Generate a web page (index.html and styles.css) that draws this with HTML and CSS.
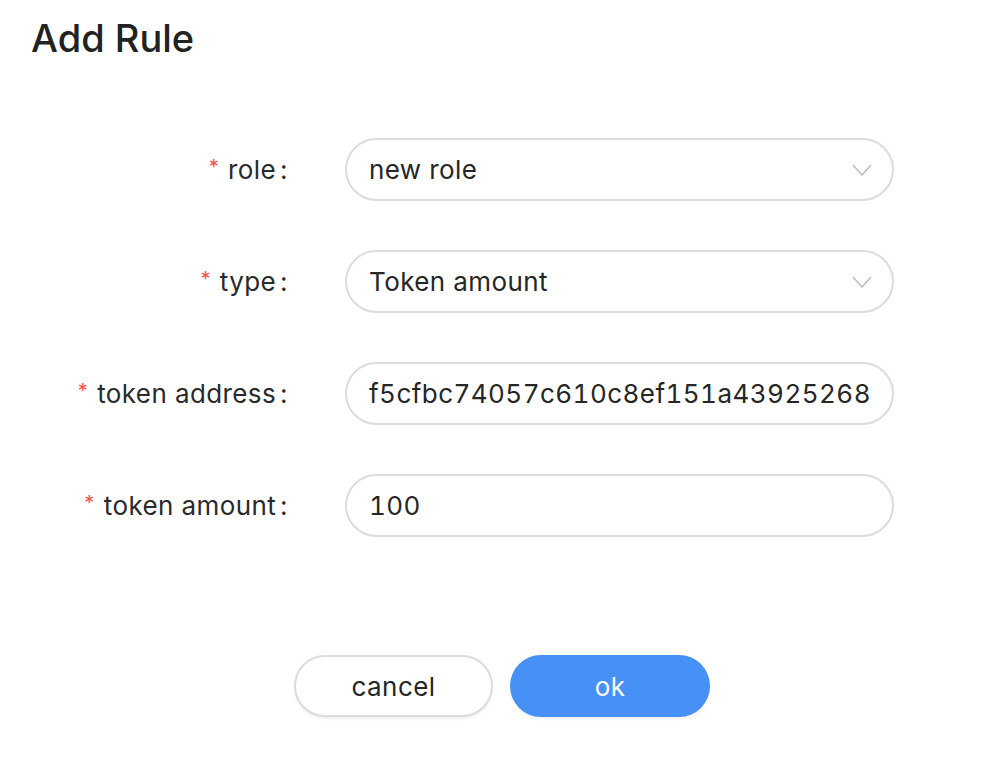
FILE: index.html
```html
<!DOCTYPE html>
<html>
<head>
<meta charset="utf-8">
<link rel="stylesheet" href="styles.css">
</head>
<body>
<div class="dialog">
  <h1 class="title">Add Rule</h1>
  <form class="form">
    <div class="row">
      <label class="label"><span class="req">*</span>role<span class="colon">:</span></label>
      <div class="field select"><span class="value">new role</span>
        <svg class="chev" width="20" height="12" viewBox="0 0 20 12"><path d="M1 1 L10 11 L19 1" fill="none" stroke="#bdbdbd" stroke-width="1.5"/></svg>
      </div>
    </div>
    <div class="row">
      <label class="label"><span class="req">*</span>type<span class="colon">:</span></label>
      <div class="field select"><span class="value">Token amount</span>
        <svg class="chev" width="20" height="12" viewBox="0 0 20 12"><path d="M1 1 L10 11 L19 1" fill="none" stroke="#bdbdbd" stroke-width="1.5"/></svg>
      </div>
    </div>
    <div class="row">
      <label class="label"><span class="req">*</span>token address<span class="colon">:</span></label>
      <div class="field"><span class="value num">f5cfbc74057c610c8ef151a43925268</span></div>
    </div>
    <div class="row">
      <label class="label"><span class="req">*</span>token amount<span class="colon">:</span></label>
      <div class="field"><span class="value num">100</span></div>
    </div>
  </form>
  <div class="actions">
    <button class="btn cancel" type="button">cancel</button>
    <button class="btn ok" type="button">ok</button>
  </div>
</div>
</body>
</html>
```
FILE: styles.css
```css
html, body {
  margin: 0;
  padding: 0;
  background: #fff;
}
body {
  font-family: Inter, "Noto Sans", sans-serif;
  color: #262626;
}
.dialog {
  width: 984px;
  height: 768px;
}
.title {
  margin: 0;
  padding: 14px 0 0 31px;
  font-size: 38px;
  font-weight: 500;
  line-height: 48px;
  color: #222;
}
.form {
  margin-top: 76px;
  display: flex;
  flex-direction: column;
  gap: 49px;
}
.row {
  display: flex;
  align-items: center;
}
.label {
  width: 288px;
  flex: none;
  text-align: right;
  font-size: 26px;
  letter-spacing: 0.4px;
  color: #2a2a2a;
  display: flex;
  justify-content: flex-end;
  align-items: center;
}
.req {
  color: #f5504e;
  font-size: 20px;
  margin-right: 9px;
  position: relative;
  top: -3px;
}
.colon {
  margin-left: 4px;
}
.field {
  margin-left: 57px;
  width: 549px;
  height: 63px;
  box-sizing: border-box;
  border: 2px solid #dcdcdc;
  border-radius: 32px;
  display: flex;
  align-items: center;
  padding: 0 20px 0 22px;
  font-size: 26px;
  letter-spacing: 0.4px;
  color: #262626;
}
.value {
  flex: 1;
  white-space: nowrap;
}
.num {
  font-variant-numeric: tabular-nums;
  letter-spacing: 0.45px;
}
.chev {
  flex: none;
}
.actions {
  margin-top: 118px;
  display: flex;
  gap: 17px;
  padding-left: 294px;
}
.btn {
  width: 199px;
  height: 62px;
  border-radius: 31px;
  font-family: Inter, "Noto Sans", sans-serif;
  font-size: 26px;
  letter-spacing: 0.4px;
  cursor: pointer;
  box-shadow: 0 2px 3px rgba(0,0,0,0.06);
}
.cancel {
  background: #fff;
  border: 2px solid #dcdcdc;
  color: #262626;
}
.ok {
  width: 200px;
  background: #4690f6;
  border: none;
  color: #fff;
}
```
